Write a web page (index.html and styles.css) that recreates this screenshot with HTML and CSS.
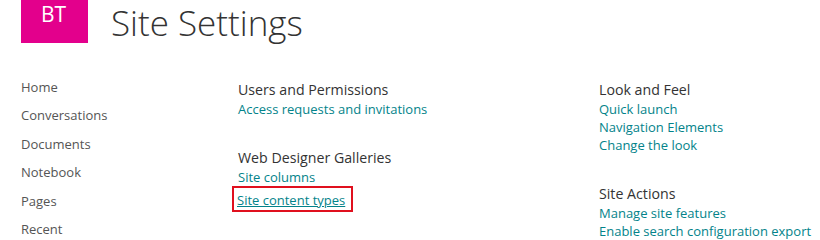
FILE: index.html
```html
<!DOCTYPE html>
<html>
<head>
<meta charset="utf-8">
<link rel="stylesheet" href="styles.css">
</head>
<body>
<header class="top">
  <div class="logo">BT</div>
  <h1 class="title">Site Settings</h1>
</header>
<main class="main">
  <nav class="nav">
    <a class="nav-item">Home</a>
    <a class="nav-item">Conversations</a>
    <a class="nav-item">Documents</a>
    <a class="nav-item">Notebook</a>
    <a class="nav-item">Pages</a>
    <a class="nav-item">Recent</a>
  </nav>
  <div class="col col-mid">
    <section class="group">
      <h2 class="group-title">Users and Permissions</h2>
      <a class="link">Access requests and invitations</a>
    </section>
    <section class="group">
      <h2 class="group-title">Web Designer Galleries</h2>
      <a class="link">Site columns</a>
      <span class="highlight"><a class="link link-u">Site content types</a></span>
    </section>
  </div>
  <div class="col col-right">
    <section class="group">
      <h2 class="group-title">Look and Feel</h2>
      <a class="link">Quick launch</a>
      <a class="link">Navigation Elements</a>
      <a class="link">Change the look</a>
    </section>
    <section class="group">
      <h2 class="group-title">Site Actions</h2>
      <a class="link">Manage site features</a>
      <a class="link">Enable search configuration export</a>
    </section>
  </div>
</main>
</body>
</html>
```
FILE: styles.css
```css
html, body {
  margin: 0;
  padding: 0;
  background: #ffffff;
  font-family: "Open Sans", "Noto Sans", sans-serif;
  overflow: hidden;
}
.top {
  display: flex;
  align-items: flex-start;
  padding-left: 21px;
  height: 43px;
}
.logo {
  width: 67px;
  height: 43px;
  background: #e3008c;
  color: #ffffff;
  font-size: 21px;
  line-height: 28px;
  padding-left: 20px;
  box-sizing: border-box;
}
.title {
  margin: 0 0 0 23px;
  font-size: 35px;
  font-weight: 300;
  line-height: 45px;
  color: #333333;
  white-space: nowrap;
}
.main {
  display: flex;
  align-items: flex-start;
  padding-left: 21px;
}
.nav {
  width: 217px;
  margin-top: 30px;
  display: flex;
  flex-direction: column;
}
.nav-item {
  font-size: 13px;
  line-height: 28.4px;
  color: #555555;
}
.col {
  margin-top: 37px;
  display: flex;
  flex-direction: column;
  gap: 30px;
}
.col-mid { width: 361px; }
.group {
  display: flex;
  flex-direction: column;
  align-items: flex-start;
}
.group-title {
  margin: 0;
  font-size: 14.2px;
  font-weight: 400;
  line-height: 20px;
  color: #333333;
}
.link {
  font-size: 13px;
  line-height: 18px;
  color: #03838a;
}
.link-u { text-decoration: underline; }
.highlight {
  display: inline-block;
  border: 2px solid #e0101e;
  margin: 0 0 0 -6px;
  padding: 0 6px 0 3px;
}
```
